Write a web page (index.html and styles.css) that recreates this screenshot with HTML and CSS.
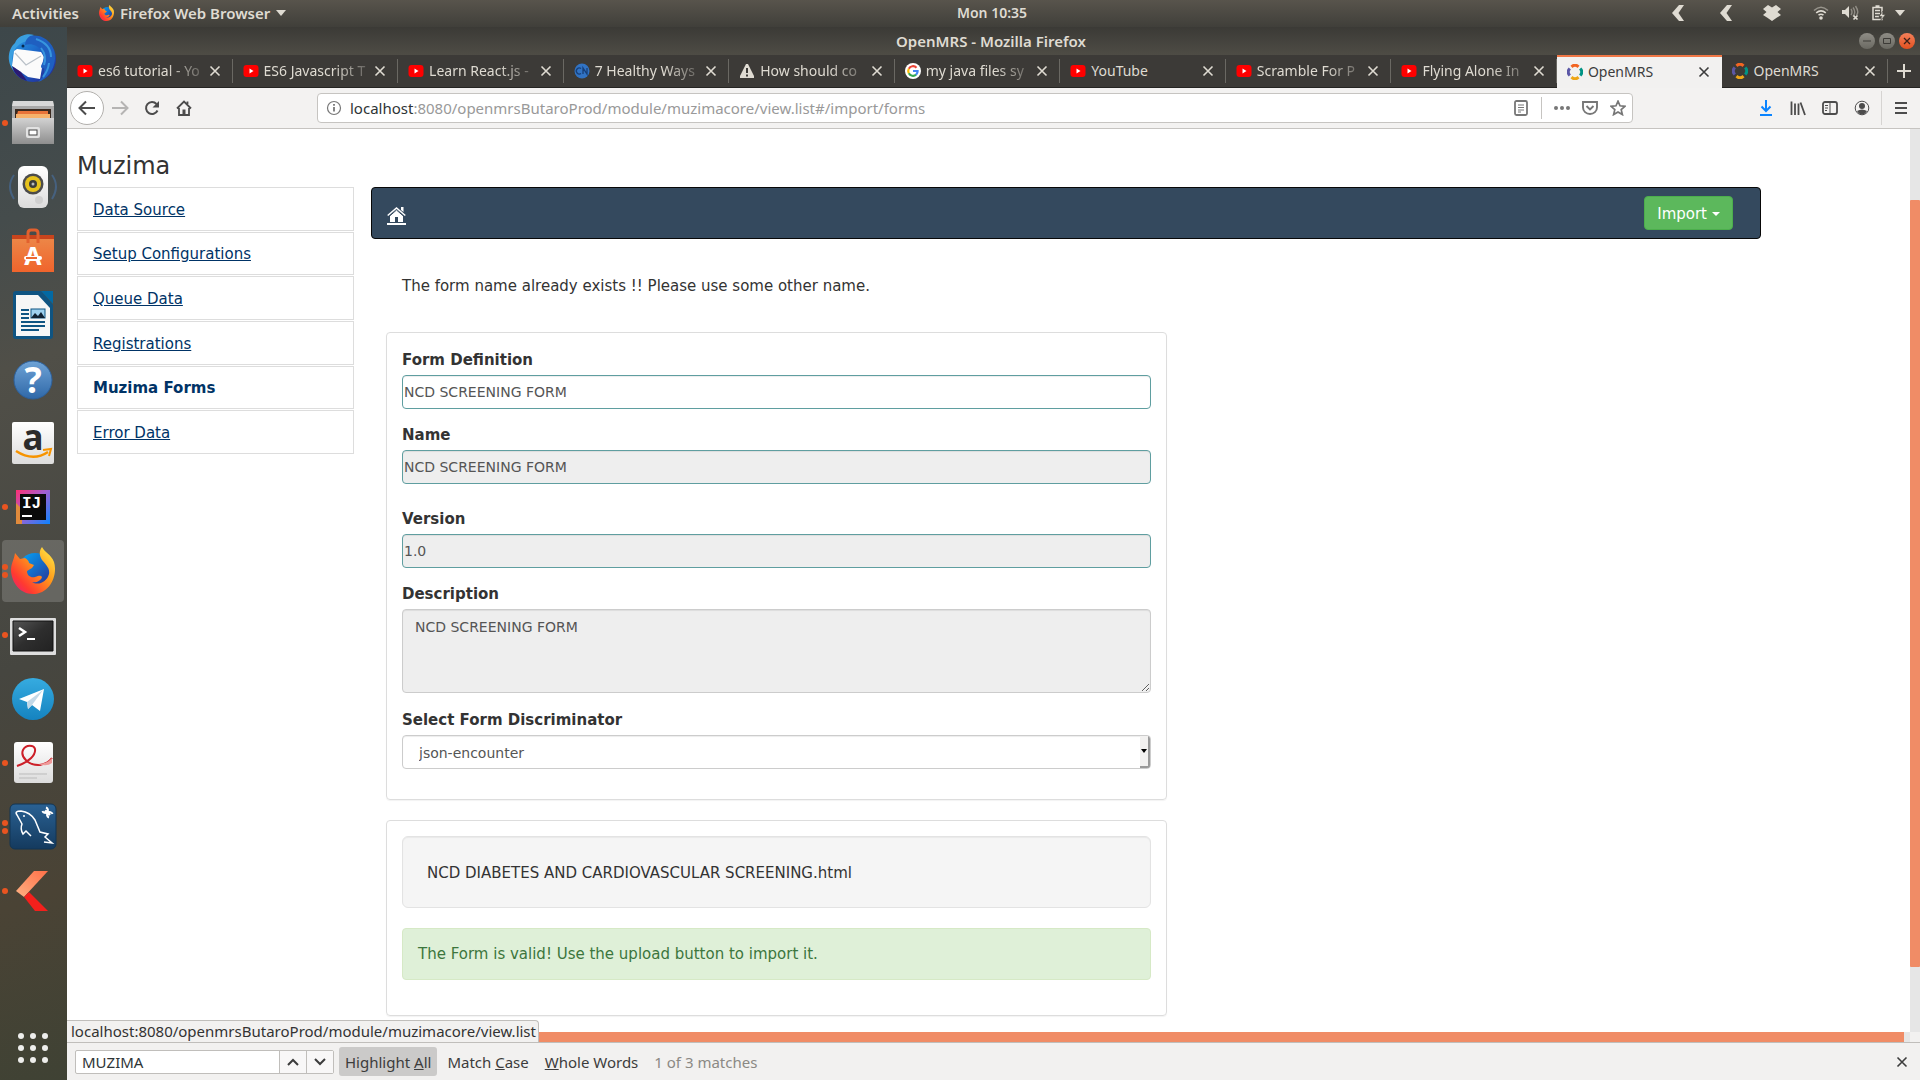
FILE: index.html
```html
<!DOCTYPE html>
<html lang="en">
<head>
<meta charset="utf-8">
<title>OpenMRS</title>
<link rel="stylesheet" href="styles.css">
</head>
<body>
<svg class="defs" aria-hidden="true">
  <defs>
    <linearGradient id="gFox" x1="1" y1="0" x2="0" y2="1"><stop offset="0" stop-color="#fff44f"/><stop offset=".4" stop-color="#ff9a1a"/><stop offset=".75" stop-color="#ff3a30"/><stop offset="1" stop-color="#e31587"/></linearGradient>
    <linearGradient id="gGlobe" x1="0" y1="0" x2="1" y2="1"><stop offset="0" stop-color="#00aaff"/><stop offset="1" stop-color="#2b2a8c"/></linearGradient>
    <linearGradient id="gBird" x1="0" y1="0" x2="1" y2="1"><stop offset="0" stop-color="#2aa2e8"/><stop offset=".5" stop-color="#1b5fc4"/><stop offset="1" stop-color="#26208c"/></linearGradient>
    <linearGradient id="gMetal" x1="0" y1="0" x2="0" y2="1"><stop offset="0" stop-color="#d2d2d2"/><stop offset="1" stop-color="#8e8e8e"/></linearGradient>
    <linearGradient id="gPaper" x1="0" y1="0" x2="0" y2="1"><stop offset="0" stop-color="#ffffff"/><stop offset="1" stop-color="#dcdcdc"/></linearGradient>
    <linearGradient id="gBag" x1="0" y1="0" x2="0" y2="1"><stop offset="0" stop-color="#ec8a4a"/><stop offset="1" stop-color="#f0642c"/></linearGradient>
    <linearGradient id="gHelp" x1="0" y1="0" x2="0" y2="1"><stop offset="0" stop-color="#6fa3d6"/><stop offset="1" stop-color="#2f68a8"/></linearGradient>
    <linearGradient id="gIj" x1="0" y1="0" x2="1" y2="1"><stop offset="0" stop-color="#fe2f72"/><stop offset=".45" stop-color="#a45fd0"/><stop offset="1" stop-color="#0a84ff"/></linearGradient>
    <linearGradient id="gTele" x1="0" y1="0" x2="0" y2="1"><stop offset="0" stop-color="#36abe0"/><stop offset="1" stop-color="#1583c0"/></linearGradient>
    <linearGradient id="gSql" x1="0" y1="0" x2="0" y2="1"><stop offset="0" stop-color="#2a6193"/><stop offset="1" stop-color="#143a5e"/></linearGradient>
    <linearGradient id="gTerm" x1="0" y1="0" x2="1" y2="1"><stop offset="0" stop-color="#555"/><stop offset=".5" stop-color="#2e2e2e"/><stop offset="1" stop-color="#222"/></linearGradient>
    <linearGradient id="gArrow" x1="1" y1="0" x2="0" y2="1"><stop offset="0" stop-color="#ff7048"/><stop offset="1" stop-color="#ffb183"/></linearGradient>
    <symbol id="fox" viewBox="0 0 44 47">
      <circle cx="24" cy="23" r="17" fill="url(#gGlobe)"/>
      <path d="M4 6l5 6 5-1c2 1 4 3 4 5l5 2-2 3-5 3c0 5 4 7 8 6 4-1 5-2 7 0-1 4-6 6-10 5 6 4 15 0 17-8 1-6-3-9-7-14-3-5-3-9 0-13 3 6 9 7 12 15 4 13-4 32-21 32C9 47 1 36 0 24 0 16 3 13 4 6z" fill="url(#gFox)"/>
    </symbol>
    <symbol id="yt" viewBox="0 0 15 16"><rect y="2" width="15" height="12" rx="3" fill="#f00"/><path d="M6 5.500l4 2.500-4 2.500z" fill="#fff"/></symbol>
    <symbol id="omrs" viewBox="0 0 16 16"><g fill="none" stroke-width="3"><path d="M4.500 2.800Q8-.5 11.500 2.800" stroke="#f26522"/><path d="M13.200 4.500Q16.500 8 13.200 11.500" stroke="#009384"/><path d="M11.500 13.200Q8 16.500 4.500 13.200" stroke="#eea616"/><path d="M2.800 11.500Q-.5 8 2.800 4.500" stroke="#5b57a6"/></g></symbol>
    <symbol id="x" viewBox="0 0 12 12"><path d="M1.500 1.500l9 9m0-9l-9 9" stroke="currentColor" stroke-width="1.600" fill="none"/></symbol>
    <symbol id="chev" viewBox="0 0 14 16"><path d="M8 0h5L7.500 8 13 16H8L1 8z" fill="#dfdbd2"/></symbol>
  </defs>
</svg>

<header class="topbar">
  <div class="topbar-left">
    <button class="plain">Activities</button>
    <button class="plain app-menu"><svg width="15" height="16"><use href="#fox"/></svg>Firefox Web Browser<svg width="10" height="6"><path d="M0 0h10L5 6z" fill="#dfdbd2"/></svg></button>
  </div>
  <div class="clock">Mon 10:35</div>
  <div class="tray">
    <svg width="14" height="16"><use href="#chev"/></svg>
    <svg width="14" height="16"><use href="#chev"/></svg>
    <svg class="tray-box" width="18" height="16" viewBox="0 0 18 16"><path d="M5 0l4 2.500L13 0l5 4-3.500 3L18 10l-4 2.500L9 16l-5-3.500L0 10l3.500-3L0 4z" fill="#dfdbd2"/></svg>
    <svg width="16" height="14" viewBox="0 0 16 14"><g fill="none" stroke="#dfdbd2" stroke-width="1.600"><path d="M1 4.500Q8-2 15 4.500" opacity=".5"/><path d="M3.200 6.800q4.800-4 9.600 0"/><path d="M5.500 9.200q2.500-2 5 0"/></g><circle cx="8" cy="12" r="1.800" fill="#dfdbd2"/></svg>
    <svg width="17" height="16" viewBox="0 0 17 16"><path d="M0 5h3l4-4v12l-4-4H0z" fill="#dfdbd2"/><g fill="none" stroke="#dfdbd2" opacity=".45" stroke-width="1.400"><path d="M9 4q2 3 0 6M11 2.500q3.500 4.500 0 9M13.500 1q4 6 1 9"/></g><path d="M11.500 10.500l4 4m0-4l-4 4" stroke="#dfdbd2" stroke-width="1.700"/></svg>
    <svg width="14" height="16" viewBox="0 0 14 16"><path d="M1 2.500h9v12H1zM3.500 1h4M3 5.500h5M3 8.500h5M3 11.500h4" fill="none" stroke="#dfdbd2" stroke-width="1.500"/><path d="M11 6L7 11.500h3L8.500 16l5-6.500h-3z" fill="#dfdbd2" stroke="#46443e" stroke-width=".6"/></svg>
    <svg class="tray-menu" width="10" height="6"><path d="M0 0h10L5 6z" fill="#dfdbd2"/></svg>
  </div>
</header>

<div class="desktop">
  <nav class="dock" aria-label="Dock">
    <button aria-label="Thunderbird"><svg viewBox="0 0 67 64"><circle cx="33" cy="32" r="23" fill="url(#gBird)"/><path d="M15 16c3-8 13-10 19-8-4 2-5 4-3 6-8 0-12 3-16 8-4 6-3 15-1 22-8-9-6-22 1-28z" fill="#3a9fe0"/><path d="M14 24l3-2 24 3 3 5-4 22-12-2-16-11z" fill="#fbfbfb"/><path d="M15 26l11 12 15-9" fill="none" stroke="#b9c0c8" stroke-width="1.200"/><path d="M30 9c14-3 26 9 25 23-1 12-8 20-17 23 5-5 7-9 6-14-2 1-3 0-3-2 3-6 4-10 1-15-4-6-11-8-17-6 0-4 2-7 5-9z" fill="#1f5fc0"/><path d="M36 12c9 3 15 9 15 18M41 21c4 5 5 11 3 17M49 36q-1 8-6 14" fill="none" stroke="#3795de" stroke-width="2"/><path d="M12 39c2 8 8 13 15 15l-6-9z" fill="#2b1a72"/><circle cx="23" cy="19" r="1.500" fill="#082a50"/></svg></button>
    <button aria-label="Files"><svg viewBox="0 0 67 64"><circle cx="5" cy="32" r="3" fill="#e95420"/><path d="M13 10h40l1 6v36H12V16z" fill="#a9a9a9"/><path d="M13 10h40l1 5H12z" fill="#d8d8d8"/><path d="M15 18h36v9H15z" fill="#3a2a20"/><path d="M18 20h30v7H16z" fill="#e8743a"/><path d="M16 23h34v4H16z" fill="#f6b26b"/><path d="M12 27h42v26H12z" fill="url(#gMetal)"/><rect x="26" y="36" width="14" height="11" rx="2" fill="#e2e2e2"/><rect x="29" y="39" width="8" height="5" fill="#fff" stroke="#444"/></svg></button>
    <button aria-label="Rhythmbox"><svg viewBox="0 0 67 64"><path d="M14 20Q6 31 14 44M52 20q8 11 0 24" fill="none" stroke="#46617f" stroke-width="2"/><rect x="18" y="11" width="30" height="42" rx="6" fill="url(#gPaper)"/><circle cx="33" cy="29" r="10.500" fill="#4b4b4b"/><circle cx="33" cy="29" r="8" fill="#e6c21c"/><circle cx="33" cy="29" r="4" fill="#3c3c3c"/><circle cx="33" cy="29" r="1.500" fill="#bbb"/><circle cx="39" cy="45" r="4" fill="#d0d0d0"/></svg></button>
    <button aria-label="Ubuntu Software"><svg viewBox="0 0 67 64"><path d="M12 16h42v37H12z" fill="url(#gBag)"/><path d="M12 16h42v4H12z" fill="#c9441c"/><path d="M28 24V14q0-3 3-3h4q3 0 3 3v10" fill="none" stroke="#e2602e" stroke-width="3"/><text x="33" y="46" text-anchor="middle" font-size="25" font-weight="bold" class="glyph">A</text><rect x="24" y="37" width="18" height="4" rx="2" fill="#fff"/><rect x="26" y="38" width="11" height="2" fill="#ee6a33"/></svg></button>
    <button aria-label="LibreOffice Writer"><svg viewBox="0 0 67 64"><path d="M16 8h25l12 14v31q0 3-3 3H16q-3 0-3-3V11q0-3 3-3z" fill="#0f5482"/><path d="M41 8h12v13z" fill="#0369a3"/><path d="M16 12h22l12 13v28H16z" fill="#f6f6f6"/><path d="M21 27h8M21 31h8M21 35h8M21 39h24M21 43h24M21 47h18" stroke="#0f5482" stroke-width="2"/><rect x="31" y="26" width="14" height="9" fill="#9ed0ee" stroke="#0f5482"/><path d="M31 35l4-5 3 3 3-4 4 6z" fill="#123"/></svg></button>
    <button aria-label="Help"><svg viewBox="0 0 67 64"><circle cx="33" cy="33" r="19" fill="url(#gHelp)" stroke="#2c609c"/><text x="33" y="46" text-anchor="middle" font-size="36" font-weight="bold" class="glyph">?</text></svg></button>
    <button aria-label="Amazon"><svg viewBox="0 0 67 64"><rect x="12" y="11" width="42" height="42" rx="2" fill="url(#gPaper)"/><text x="33" y="39" text-anchor="middle" font-size="35" font-weight="bold" class="glyph dark">a</text><path d="M16 40q17 11 32 1" fill="none" stroke="#f79400" stroke-width="2.500"/><path d="M43 39l8-1-2 7" fill="none" stroke="#f79400" stroke-width="2"/></svg></button>
    <button aria-label="IntelliJ IDEA"><svg viewBox="0 0 67 64"><circle cx="5" cy="32" r="3" fill="#e95420"/><path d="M16 15h34v34H16z" fill="url(#gIj)"/><path d="M16 28l6 6v15h-6z" fill="#e08a3c"/><path d="M20 19h26v26H20z" fill="#0a0a0a"/><text x="22" y="33" font-size="16" font-weight="bold" class="glyph mono">IJ</text><path d="M22 41h10" stroke="#fff" stroke-width="2"/></svg></button>
    <button aria-label="Firefox"><svg viewBox="0 0 67 64"><rect x="2" y="1" width="62" height="62" rx="4" fill="#fff" opacity=".17"/><circle cx="5" cy="28" r="3" fill="#e95420"/><circle cx="5" cy="36" r="3" fill="#e95420"/><use href="#fox" x="11" y="8" width="44" height="47"/></svg></button>
    <button aria-label="Terminal"><svg viewBox="0 0 67 64"><circle cx="5" cy="32" r="3" fill="#e95420"/><rect x="10" y="15" width="46" height="37" rx="1" fill="#dedede"/><path d="M13 18h40v30H13z" fill="url(#gTerm)" stroke="#111"/><path d="M19 25l6 4-6 4" fill="none" stroke="#fff" stroke-width="2.500"/><path d="M27 36h8" stroke="#fff" stroke-width="2"/></svg></button>
    <button aria-label="Telegram"><svg viewBox="0 0 67 64"><circle cx="33" cy="32" r="21" fill="url(#gTele)"/><path d="M19 32l25-10-4 22-8-6-4 4-1-7z" fill="#fff"/><path d="M27 35l16-12-11 15-4 4z" fill="#c3d9e8"/></svg></button>
    <button aria-label="Document Viewer"><svg viewBox="0 0 67 64"><circle cx="5" cy="32" r="3" fill="#e95420"/><rect x="14" y="11" width="39" height="41" rx="3" fill="url(#gPaper)"/><path d="M17 35c12-4 19-11 18-17-1-4-9-5-12 1-3 7 6 16 17 15 5-1 9-3 12-7" fill="none" stroke="#cc1f28" stroke-width="2"/><path d="M38 33q9 0 14-6v5q-5 4-14 1z" fill="#e99"/><path d="M19 43h28M19 47h18" stroke="#bbb"/></svg></button>
    <button aria-label="MySQL Workbench"><svg viewBox="0 0 67 64"><circle cx="5" cy="28" r="3" fill="#e95420"/><circle cx="5" cy="36" r="3" fill="#e95420"/><rect x="10" y="9" width="46" height="45" rx="5" fill="url(#gSql)" stroke="#123553"/><path d="M31 41l-5-5-3 3q-3-5-1-10l-5-9q-3-4 4-4 9 1 14 9l5 12 8 2-3 3 7 6-8-1" fill="none" stroke="#fff" stroke-width="1.500"/><circle cx="24" cy="21" r="1" fill="#fff"/><path d="M45 15.500l5 4.500" stroke="#fff" stroke-width="3"/><path d="M46 12.500a2.800 2.800 0 1 1-3.500 3.500M49 22.500a2.800 2.800 0 1 1 3.500-3.500" fill="none" stroke="#fff" stroke-width="2"/></svg></button>
    <button aria-label="Remote desktop"><svg viewBox="0 0 67 64"><circle cx="5" cy="32" r="3" fill="#e95420"/><path d="M34 12h14L24 38l-8-6z" fill="url(#gArrow)"/><path d="M29 33l-5 5 11 14h13z" fill="#f3201c"/></svg></button>
    <button class="apps" aria-label="Show Applications"><svg viewBox="0 0 67 64"><g fill="#eeeeec"><circle cx="21" cy="20" r="3"/><circle cx="33" cy="20" r="3"/><circle cx="45" cy="20" r="3"/><circle cx="21" cy="32" r="3"/><circle cx="33" cy="32" r="3"/><circle cx="45" cy="32" r="3"/><circle cx="21" cy="44" r="3"/><circle cx="33" cy="44" r="3"/><circle cx="45" cy="44" r="3"/></g></svg></button>
  </nav>

  <div class="window">
    <div class="titlebar">
      <span class="window-title">OpenMRS - Mozilla Firefox</span>
      <div class="window-buttons">
        <button aria-label="Minimize"><svg viewBox="0 0 16 16"><path d="M4 8h8" stroke="#3c3b37"/></svg></button>
        <button aria-label="Maximize"><svg viewBox="0 0 16 16"><path d="M4.500 5.500h7v5h-7z" fill="none" stroke="#3c3b37"/></svg></button>
        <button class="quit" aria-label="Close"><svg viewBox="0 0 16 16"><path d="M5 5l6 6m0-6l-6 6" stroke="#3c2018" stroke-width="1.300"/></svg></button>
      </div>
    </div>

    <div class="tabstrip">
      <div class="tab"><svg class="fav"><use href="#yt"/></svg><span class="faded">es6 tutorial - Yo</span><button aria-label="Close tab"><svg><use href="#x"/></svg></button></div>
      <div class="tab"><svg class="fav"><use href="#yt"/></svg><span class="faded">ES6 Javascript T</span><button aria-label="Close tab"><svg><use href="#x"/></svg></button></div>
      <div class="tab"><svg class="fav"><use href="#yt"/></svg><span class="faded">Learn React.js -</span><button aria-label="Close tab"><svg><use href="#x"/></svg></button></div>
      <div class="tab"><svg class="fav" viewBox="0 0 16 16"><circle cx="8" cy="8" r="7.500" fill="#3173c4"/><path d="M7 5.500a3 3 0 1 0 0 5M9 11V5l4 6V5" stroke="#173f78" stroke-width="1.300" fill="none"/></svg><span class="faded">7 Healthy Ways</span><button aria-label="Close tab"><svg><use href="#x"/></svg></button></div>
      <div class="tab"><svg class="fav" viewBox="0 0 16 16"><path d="M7 1h2l6 12v2H1v-2z" fill="#dfdbd2"/><path d="M8 5v5M8 11.500v2" stroke="#3c3a37" stroke-width="2"/></svg><span class="faded">How should co</span><button aria-label="Close tab"><svg><use href="#x"/></svg></button></div>
      <div class="tab"><svg class="fav" viewBox="0 0 16 16"><circle cx="8" cy="8" r="8" fill="#fff"/><g fill="none" stroke-width="2.200"><path d="M11.500 4.700A4.800 4.800 0 0 0 3.800 5.800" stroke="#ea4335"/><path d="M3.800 5.800a4.800 4.800 0 0 0 0 4.500" stroke="#fbbc05"/><path d="M3.800 10.300a4.800 4.800 0 0 0 7.300 1.400" stroke="#34a853"/><path d="M11.100 11.700A4.800 4.800 0 0 0 12.600 8H8" stroke="#4285f4"/></g></svg><span class="faded">my java files sy</span><button aria-label="Close tab"><svg><use href="#x"/></svg></button></div>
      <div class="tab"><svg class="fav"><use href="#yt"/></svg><span>YouTube</span><button aria-label="Close tab"><svg><use href="#x"/></svg></button></div>
      <div class="tab"><svg class="fav"><use href="#yt"/></svg><span class="faded">Scramble For P</span><button aria-label="Close tab"><svg><use href="#x"/></svg></button></div>
      <div class="tab"><svg class="fav"><use href="#yt"/></svg><span class="faded">Flying Alone In</span><button aria-label="Close tab"><svg><use href="#x"/></svg></button></div>
      <div class="tab active"><svg class="fav"><use href="#omrs"/></svg><span>OpenMRS</span><button aria-label="Close tab"><svg><use href="#x"/></svg></button></div>
      <div class="tab"><svg class="fav"><use href="#omrs"/></svg><span>OpenMRS</span><button aria-label="Close tab"><svg><use href="#x"/></svg></button></div>
      <button class="new-tab" aria-label="New tab"><svg width="14" height="14"><path d="M7 0v14M0 7h14" stroke="currentColor" stroke-width="2"/></svg></button>
    </div>

    <div class="toolbar">
      <div class="nav-buttons">
        <button class="back" aria-label="Back"><svg width="18" height="16"><path d="M17 8H2M8 1.500L1.500 8 8 14.500" fill="none" stroke="#4c4c4c" stroke-width="2"/></svg></button>
        <button aria-label="Forward"><svg width="18" height="16"><path d="M1 8h15M10 1.500L16.500 8 10 14.500" fill="none" stroke="#b5b4b3" stroke-width="2"/></svg></button>
        <button aria-label="Reload"><svg width="16" height="16"><path d="M13.500 10.500A6 6 0 1 1 12.500 4" fill="none" stroke="#4c4c4c" stroke-width="2"/><path d="M15 1v6.500H8.500z" fill="#4c4c4c"/></svg></button>
        <button aria-label="Home"><svg width="16" height="16"><path d="M1 8.500L8 1.500l7 7M3 8v7h10V8M11.500 4V1.500" fill="none" stroke="#4c4c4c" stroke-width="1.800"/><path d="M6.500 9.500h3V15h-3z" fill="#4c4c4c"/></svg></button>
      </div>
      <div class="urlbar">
        <svg width="16" height="16"><circle cx="8" cy="8" r="6.500" fill="none" stroke="#777" stroke-width="1.200"/><path d="M8 7v4.500M8 4v1.800" stroke="#777" stroke-width="1.800"/></svg>
        <a class="address" href="#/import/forms"><b>localhost</b>:8080/openmrsButaroProd/module/muzimacore/view.list#/import/forms</a>
        <button aria-label="Reader view"><svg width="16" height="16"><rect x="2" y="1" width="12" height="14" rx="1.500" fill="none" stroke="#777" stroke-width="1.800"/><path d="M5 5h6M5 7.500h6M5 10h6M5 12h3" stroke="#777"/></svg></button>
        <span class="divider"></span>
        <button aria-label="Page actions"><svg width="16" height="16"><g fill="#777"><circle cx="2" cy="8" r="2"/><circle cx="8" cy="8" r="2"/><circle cx="14" cy="8" r="2"/></g></svg></button>
        <button aria-label="Pocket"><svg width="16" height="16"><path d="M1 2h14v5.500a7 6.500 0 0 1-14 0zM4.500 6L8 9.500 11.500 6" fill="none" stroke="#777" stroke-width="1.900"/></svg></button>
        <button aria-label="Bookmark"><svg width="16" height="16"><path d="M8 1.200l2 4.600 5 .5-3.800 3.300 1.200 5L8 12l-4.400 2.600 1.200-5L1 6.300l5-.5z" fill="none" stroke="#777" stroke-width="1.700"/></svg></button>
      </div>
      <div class="tools">
        <button aria-label="Downloads"><svg width="16" height="16"><path d="M8 0v11M3.500 6.500L8 11l4.500-4.500M2 15h12" fill="none" stroke="#0a84ff" stroke-width="2"/></svg></button>
        <button aria-label="Library"><svg width="16" height="16"><path d="M1.500 1.500V15M5 3.500V15M8.500 3.500V15M10.500 2.500L15 15" fill="none" stroke="#4c4c4c" stroke-width="1.800"/></svg></button>
        <button aria-label="Sidebars"><svg width="16" height="16"><rect x="1" y="2" width="14" height="12" rx="2" fill="none" stroke="#4c4c4c" stroke-width="1.800"/><path d="M8 2v12M3 5.500h3M3 8h3M3 10.500h2" stroke="#4c4c4c"/></svg></button>
        <button aria-label="Account"><svg width="16" height="16"><circle cx="8" cy="8" r="6.800" fill="none" stroke="#4c4c4c"/><circle cx="8" cy="6" r="3" fill="#4c4c4c"/><path d="M3 11q5-3 10 0-2 3.500-5 3.500T3 11z" fill="#4c4c4c"/></svg></button>
        <span class="divider tall"></span>
        <button aria-label="Menu"><svg width="14" height="16"><path d="M1 3h12M1 8h12M1 13h12" stroke="#4c4c4c" stroke-width="2"/></svg></button>
      </div>
    </div>

    <div class="viewport">
      <div class="page">
        <aside class="side">
          <h1>Muzima</h1>
          <ul>
            <li><a href="#/sources">Data Source</a></li>
            <li><a href="#/configs">Setup Configurations</a></li>
            <li><a href="#/queues">Queue Data</a></li>
            <li><a href="#/registrations">Registrations</a></li>
            <li><a class="current" href="#/forms">Muzima Forms</a></li>
            <li><a href="#/errors">Error Data</a></li>
          </ul>
        </aside>
        <main>
          <div class="navbar">
            <a class="home" href="#/" aria-label="Home"><svg width="19" height="18"><path d="M9.500 2.500L16 8.500V15h-5v-5H8v5H3V8.500z" fill="#fff"/><path d="M.7 8.500l8.800-7.500 8.800 7.500" fill="none" stroke="#fff" stroke-width="1.500"/><path d="M14 0h2.500v5L14 3z" fill="#fff"/><path d="M3 8.700l6.500-5.700L16 8.700" fill="none" stroke="#34495e"/><path d="M0 17h19" stroke="#fff" stroke-width="2"/></svg></a>
            <button class="import">Import <span class="caret"></span></button>
          </div>
          <p class="message">The form name already exists !! Please use some other name.</p>
          <form class="panel">
            <div class="group"><label for="def">Form Definition</label><input id="def" type="text" value="NCD SCREENING FORM"></div>
            <div class="group wide-gap"><label for="name">Name</label><input id="name" type="text" value="NCD SCREENING FORM" readonly></div>
            <div class="group"><label for="ver">Version</label><input id="ver" type="text" value="1.0" readonly></div>
            <div class="group last"><label for="desc">Description</label><textarea id="desc" readonly>NCD SCREENING FORM</textarea></div>
            <div class="group last"><label for="disc">Select Form Discriminator</label><div class="select"><select id="disc"><option>json-encounter</option></select><span class="arrow"></span></div></div>
          </form>
          <section class="panel">
            <div class="well">NCD DIABETES AND CARDIOVASCULAR SCREENING.html</div>
            <div class="alert">The Form is valid! Use the upload button to import it.</div>
          </section>
        </main>
      </div>
      <div class="vscroll"><span></span></div>
      <div class="hscroll"><span></span></div>
      <div class="corner"></div>
      <div class="status">localhost:8080/openmrsButaroProd/module/muzimacore/view.list</div>
    </div>

    <div class="findbar">
      <div class="find-field">
        <input type="text" value="MUZIMA" aria-label="Find in page">
        <button aria-label="Previous"><svg width="12" height="8"><path d="M1 7l5-5 5 5" fill="none" stroke="#3c3c3c" stroke-width="2"/></svg></button>
        <button aria-label="Next"><svg width="12" height="8"><path d="M1 1l5 5 5-5" fill="none" stroke="#3c3c3c" stroke-width="2"/></svg></button>
      </div>
      <button class="toggle on">Highlight <u>A</u>ll</button>
      <button class="toggle">Match <u>C</u>ase</button>
      <button class="toggle"><u>W</u>hole Words</button>
      <span class="matches">1 of 3 matches</span>
      <button class="find-close" aria-label="Close find bar"><svg width="12" height="12"><use href="#x"/></svg></button>
    </div>
  </div>
</div>
</body>
</html>
```
FILE: styles.css
```css
* { box-sizing: border-box; }

body {
  margin: 0;
  height: 100vh;
  display: flex;
  flex-direction: column;
  overflow: hidden;
  font: 15px/20px "Noto Sans", sans-serif;
  color: #333;
}

.defs { position: absolute; width: 0; height: 0; }
svg { display: block; flex: none; }

button {
  margin: 0;
  padding: 0;
  border: 0;
  background: none;
  font: inherit;
  color: inherit;
  display: flex;
  align-items: center;
  justify-content: center;
}

/* Desktop panel */
.topbar {
  height: 27px;
  flex: none;
  display: grid;
  grid-template-columns: 1fr auto 1fr;
  align-items: center;
  padding: 0 15px 2px 12px;
  background: linear-gradient(#58544c, #403f3a);
  color: #dfdbd2;
  font-weight: 600;
}
.topbar-left { display: flex; gap: 20px; }
.app-menu { gap: 6px; }
.clock { padding-left: 67px; font-size: 14px; }
.tray { display: flex; align-items: center; justify-content: flex-end; gap: 13px; }
.tray svg:first-child { margin-right: 21px; }
.tray .tray-box { margin: 0 19px 0 17px; }
.tray .tray-menu { margin-left: -4px; }

.desktop { flex: 1; min-height: 0; display: flex; }

/* Dock */
.dock {
  width: 67px;
  flex: none;
  display: flex;
  flex-direction: column;
  background: linear-gradient(160deg, #3d474a 0, #454c4c 18%, #504f48 32%, #464640 60%, #4a4335 82%, #3f4234 100%);
}
.dock button { height: 64px; flex: 0 1 64px; min-height: 0; }
.dock svg { width: 67px; height: 64px; }
.dock .apps { margin-top: auto; }
.glyph { fill: #fff; font-family: "Noto Sans", sans-serif; }
.glyph.dark { fill: #2b2b2b; }
.glyph.mono { font-family: "Liberation Mono", monospace; }

.window { flex: 1; min-width: 0; display: flex; flex-direction: column; }

.titlebar {
  height: 28px;
  flex: none;
  display: grid;
  grid-template-columns: 1fr auto 1fr;
  align-items: center;
  padding-right: 5px;
  background: linear-gradient(#3b3a36, #4e4c45);
  color: #dfdbd2;
  font-weight: 600;
}
.window-title { grid-column: 2; }
.window-buttons { display: flex; justify-content: flex-end; gap: 4px; }
.window-buttons button { width: 16px; height: 16px; border-radius: 50%; background: linear-gradient(#8f8d86, #6a6962); }
.window-buttons svg { width: 16px; height: 16px; }
.window-buttons .quit { background: linear-gradient(#f4805a, #e2501f); }

/* Tabs */
.tabstrip {
  height: 33px;
  flex: none;
  display: flex;
  background: #3c3a37;
  border-bottom: 1px solid #252422;
  color: #dfdbd2;
  font-size: 14px;
}
.tab {
  flex: 1 1 0;
  min-width: 0;
  display: flex;
  align-items: center;
  gap: 5px;
  padding: 0 12px 0 10px;
  background: linear-gradient(#6a6863, #6a6863) right center / 1px 24px no-repeat;
}
.tab span { flex: 1; white-space: nowrap; }
.tab .faded {
  -webkit-mask-image: linear-gradient(to right, #000 65%, rgba(0, 0, 0, .2));
  mask-image: linear-gradient(to right, #000 65%, rgba(0, 0, 0, .2));
}
.tab .fav { width: 16px; height: 16px; }
.tab button svg { width: 12px; height: 12px; }
.tab.active { background: #f2f1f0; color: #3c3c3c; box-shadow: inset 0 2px #f07746; margin-bottom: -1px; }
.new-tab { width: 32px; }

/* Navigation toolbar */
.toolbar {
  height: 41px;
  flex: none;
  display: flex;
  align-items: center;
  background: #f3f2f1;
  border-bottom: 1px solid #c6c4c1;
}
.nav-buttons { display: flex; align-items: center; width: 250px; padding-left: 3px; }
.nav-buttons button { width: 32px; height: 34px; }
.nav-buttons .back { width: 34px; background: #fff; border: 1px solid #b2b0ad; border-radius: 50%; }
.urlbar {
  flex: 1;
  min-width: 0;
  height: 30px;
  display: flex;
  align-items: center;
  gap: 12px;
  padding: 0 6px 0 8px;
  background: #fff;
  border: 1px solid #c6c4c1;
  border-radius: 4px;
}
.address { flex: 1; min-width: 0; margin-left: -4px; overflow: hidden; white-space: nowrap; color: #999; text-decoration: none; }
.address b { font-weight: 400; color: #2e3436; }
.divider { width: 1px; height: 22px; background: #c6c4c1; }
.divider.tall { height: 34px; background: #d6d4d2; }
.tools { width: 287px; display: flex; align-items: center; justify-content: flex-end; padding-right: 12px; gap: 16px; }
.tools .divider { margin: 0 -4px 0 -5px; }

/* Page area */
.viewport {
  position: relative;
  flex: 1;
  min-height: 0;
  display: grid;
  grid-template: minmax(0, 1fr) 10px / minmax(0, 1fr) 10px;
  background: #fff;
}
.page { display: flex; gap: 17px; overflow: hidden; padding: 0 10px; font: 15px/22px "DejaVu Sans", sans-serif; }
.vscroll { display: flex; flex-direction: column; background: #e6e6e6; }
.vscroll::before { content: ""; flex: 71; }
.vscroll::after { content: ""; flex: 65; }
.vscroll span { flex: 767; border-radius: 1px; background: #f08c66; }
.hscroll { display: flex; padding-right: 6px; background: #e6e6e6; }
.hscroll span { flex: 1; background: #f08c66; }
.corner { background: #f2f1f0; }
.status {
  position: absolute;
  left: 0;
  bottom: 0;
  height: 22px;
  padding: 0 2px 0 4px;
  background: #f2f1f0;
  border: 1px solid #c0bebb;
  border-width: 1px 1px 0 0;
  border-radius: 0 4px 0 0;
}

.side { width: 277px; flex: none; }
.side h1 { margin: 0; padding: 21px 0 5px; font-size: 24px; font-weight: 400; line-height: 32px; }
.side ul {
  margin: 0;
  padding: 0;
  min-height: 267px;
  display: grid;
  grid-auto-rows: 1fr;
  gap: 1px;
  list-style: none;
}
.side li { display: flex; align-items: center; padding: 2px 15px 0; border: 1px solid #ddd; }
.side a { color: #036; }
.side .current { font-weight: 700; text-decoration: none; }

main { flex: 1; min-width: 0; max-width: 1390px; padding-top: 58px; }
.navbar {
  height: 52px;
  display: flex;
  align-items: center;
  justify-content: space-between;
  padding: 0 27px 0 15px;
  background: #34495e;
  border: 1px solid #080808;
  border-radius: 4px;
}
.home { padding-top: 6px; }
.import { height: 34px; padding: 2px 12px 0; gap: 5px; background: #5cb85c; border: 1px solid #4cae4c; border-radius: 4px; color: #fff; }
.caret { border: 4px solid transparent; border-top-color: #fff; border-bottom: 0; }
.message { margin: 0; padding: 36px 31px 35px; }

.panel {
  max-width: 781px;
  margin: 0 15px 20px;
  padding: 15px;
  border: 1px solid #ddd;
  border-radius: 4px;
  box-shadow: 0 1px 1px rgba(0, 0, 0, .05);
}
.group { margin-bottom: 14px; }
.group.wide-gap { margin-bottom: 23px; }
.group.last { margin-bottom: 15px; }
.group label { display: block; margin-bottom: 3px; line-height: 24px; font-weight: 700; }
.group input, .group textarea, .select {
  display: block;
  width: 100%;
  height: 34px;
  margin: 0;
  padding: 0 1px;
  border: 1px solid #5f9ea0;
  border-radius: 4px;
  background: #fff;
  box-shadow: inset 0 1px 1px rgba(0, 0, 0, .075);
  font: 14px/20px "DejaVu Sans", sans-serif;
  color: #555;
}
.group input:read-only, .group textarea { background: #eee; }
.group textarea { height: 84px; padding: 7px 12px; border-color: #ccc; resize: vertical; }
.group .select { display: flex; padding: 0; border-color: #ccc; overflow: hidden; }
.select select { flex: 1; appearance: none; border: 0; padding: 2px 16px 0; background: none; font: inherit; color: inherit; }
.arrow {
  width: 10px;
  display: flex;
  align-items: center;
  justify-content: center;
  background: #f2f1f0;
  border: 2px solid #999;
  border-width: 0 2px 2px 0;
}
.arrow::before { content: ""; border: 3px solid transparent; border-top: 4px solid #000; border-bottom: 0; }

.well { padding: 25px 24px 23px; background: #f5f5f5; border: 1px solid #e3e3e3; border-radius: 6px; margin-bottom: 20px; box-shadow: inset 0 1px 1px rgba(0, 0, 0, .05); }
.alert { padding: 14px 15px; background: #dff0d8; border: 1px solid #d6e9c6; border-radius: 4px; margin-bottom: 20px; color: #3c763d; }

/* Find bar */
.findbar {
  height: 38px;
  flex: none;
  display: flex;
  align-items: center;
  padding: 0 12px 0 8px;
  background: #f2f1f0;
  border-top: 1px solid #c0bebb;
}
.find-field { display: flex; height: 24px; width: 259px; margin-right: 5px; border: 1px solid #c0bebb; border-radius: 2px; background: #fff; }
.find-field input { flex: 1; min-width: 0; border: 0; padding: 0 6px; background: none; font: inherit; color: #2e3436; }
.find-field button { width: 27px; border-left: 1px solid #c0bebb; background: #f8f7f7; }
.toggle { height: 29px; padding: 0 6px; border-radius: 3px; display: block; white-space: nowrap; color: #3c3c3c; margin-right: 4px; }
.toggle.on { background: #cbcac9; }
.matches { margin-left: 6px; color: #8b8984; }
.find-close { margin-left: auto; color: #3c3c3c; }
```
